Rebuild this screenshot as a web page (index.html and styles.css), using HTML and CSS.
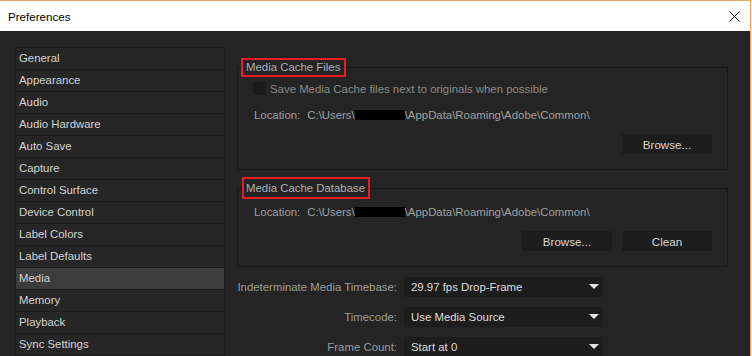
FILE: index.html
```html
<html><head><title>Preferences</title>
<link rel="stylesheet" href="styles.css">
</head>
<body>

<div class="window">
  <div class="titlebar">
    <span class="title">Preferences</span>
    <svg class="close" viewBox="0 0 11 11" width="11" height="11">
      <path d="M0.5 0.5 L10.5 10.5 M10.5 0.5 L0.5 10.5" stroke="#000" stroke-width="1" fill="none"/>
    </svg>
  </div>

  <div class="content">
    <ul class="nav">
      <li>General</li>
      <li>Appearance</li>
      <li>Audio</li>
      <li>Audio Hardware</li>
      <li>Auto Save</li>
      <li>Capture</li>
      <li>Control Surface</li>
      <li>Device Control</li>
      <li>Label Colors</li>
      <li>Label Defaults</li>
      <li class="active">Media</li>
      <li>Memory</li>
      <li>Playback</li>
      <li>Sync Settings</li>
    </ul>

    <div class="pane">
      <fieldset class="group group-files">
        <legend class="legend-files">Media Cache Files</legend>
        <div class="check-row">
          <span class="checkbox"></span>
          <span class="dim">Save Media Cache files next to originals when possible</span>
        </div>
        <div class="location">
          <span>Location:</span>
          <span class="path">C:\Users\<span class="redact"></span>\AppData\Roaming\Adobe\Common\</span>
        </div>
        <div class="buttons">
          <button class="btn">Browse...</button>
        </div>
      </fieldset>

      <fieldset class="group group-db">
        <legend class="legend-db">Media Cache Database</legend>
        <div class="location location-db">
          <span>Location:</span>
          <span class="path">C:\Users\<span class="redact"></span>\AppData\Roaming\Adobe\Common\</span>
        </div>
        <div class="buttons">
          <button class="btn">Browse...</button>
          <button class="btn">Clean</button>
        </div>
      </fieldset>

      <div class="settings">
        <label>Indeterminate Media Timebase:</label>
        <div class="select">29.97 fps Drop-Frame<span class="arrow"></span></div>
        <label>Timecode:</label>
        <div class="select">Use Media Source<span class="arrow"></span></div>
        <label>Frame Count:</label>
        <div class="select">Start at 0<span class="arrow"></span></div>
      </div>
    </div>
  </div>
</div>

</body></html>
```

FILE: styles.css
```css
body {
  margin: 0;
  padding: 0;
  background: #f0f0f0;
  font-family: "Liberation Sans", Arial, sans-serif;
  font-size: 11.4px;
  overflow: hidden;
}

.window {
  width: 750px;
  height: 355px;
  border-top: 1px solid #e8a86a;
  border-right: 1px solid #e8a86a;
  background: #242424;
  overflow: hidden;
}

.titlebar {
  height: 30px;
  background: #fff;
  display: flex;
  align-items: center;
  justify-content: space-between;
  padding: 0 10px 0 8px;
}

.title {
  color: #000;
  font-size: 11.6px;
  margin-top: 1px;
}

.close {
  display: block;
}

.content {
  display: flex;
  align-items: flex-start;
  padding: 16px 0 0 15px;
  column-gap: 12px;
}

.nav {
  list-style: none;
  margin: 0;
  padding: 0;
  width: 208px;
  border: 1px solid #1b1b1b;
  background: #262626;
}

.nav li {
  height: 21px;
  line-height: 21px;
  padding-left: 3px;
  color: #d2d2d2;
  border-bottom: 1px solid #1c1c1c;
}

.nav li.active {
  background: #3c3c3c;
}

.pane {
  width: 491px;
  padding-top: 11px;
}

.group {
  margin: 0;
  padding: 0 15px 15px 15px;
  border: 1px solid #191919;
  color: #a0a0a0;
}

.group legend {
  border: 2px solid #e81c24;
  color: #aab0b6;
  padding: 0 4px 0 3px;
  line-height: 15px;
  margin-left: -12px;
}

.group-db {
  margin-top: 7px;
}

.group .legend-db {
  line-height: 18px;
  margin-left: -11px;
  padding: 0 3px 0 2px;
}

.check-row {
  display: flex;
  align-items: center;
  height: 15px;
  margin-top: 4px;
  column-gap: 4px;
}

.checkbox {
  width: 13px;
  height: 13px;
  background: #1b1b1b;
}

.dim {
  color: #8a8a8a;
}

.location {
  height: 16px;
  line-height: 16px;
  margin-top: 11px;
  padding-left: 1px;
  display: flex;
  column-gap: 7px;
}

.location-db {
  margin-top: 5px;
}

.redact {
  display: inline-block;
  width: 50px;
  height: 10px;
  background: #000;
  vertical-align: -1px;
}

.buttons {
  display: flex;
  justify-content: flex-end;
  column-gap: 10px;
  margin-top: 11px;
}

.btn {
  width: 90px;
  height: 20px;
  border: none;
  background: #1d1d1d;
  color: #d6d6d6;
  font-family: inherit;
  font-size: 11.6px;
  padding: 0;
}

.settings {
  display: grid;
  grid-template-columns: 160px 199px;
  column-gap: 7px;
  row-gap: 10px;
  margin-top: 10px;
}

.settings label {
  text-align: right;
  color: #9c9c9c;
  line-height: 20px;
  white-space: nowrap;
}

.select {
  position: relative;
  height: 20px;
  line-height: 20px;
  background: #1d1d1d;
  color: #dedede;
  padding-left: 7px;
}

.arrow {
  position: absolute;
  right: 4px;
  top: 7px;
  width: 0;
  height: 0;
  border-left: 5px solid transparent;
  border-right: 5px solid transparent;
  border-top: 5px solid #e6e6e6;
}
```
